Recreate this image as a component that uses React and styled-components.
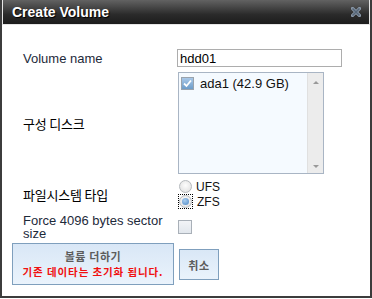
import styled, { createGlobalStyle } from 'styled-components';

const Global = createGlobalStyle`
  html, body { margin: 0; padding: 0; background: #fff; }
  body { font-family: "Liberation Sans", Arial, sans-serif; }
`;

const Window = styled.div`
  box-sizing: border-box;
  width: 372px;
  height: 298px;
  border: 2px solid #3c3c3c;
  border-top: 0;
  background: #fff;
  display: flex;
  flex-direction: column;
`;

const TitleBar = styled.div`
  box-sizing: border-box;
  height: 25px;
  margin: 0 -2px;
  border: 2px solid #3c3c3c;
  border-top: 0;
  border-bottom: 0;
  display: flex;
`;

const TitleInner = styled.div`
  flex: 1;
  display: flex;
  align-items: center;
  justify-content: space-between;
  padding: 0 8px 1px 9px;
  background: linear-gradient(#626262, #2b2b2b 60%, #1c1c1c);
  border: 1px solid #e6e6e6;
  border-top: 0;
`;

const Title = styled.span`
  color: #fff;
  font-weight: bold;
  font-size: 14px;
  text-shadow: 1px 1px 1px #000;
`;

const Body = styled.div`
  padding: 24px 0 0 21px;
  display: grid;
  grid-template-columns: 154px 166px;
  row-gap: 5px;
  align-items: center;
`;

const Label = styled.div`
  color: ${({ $kr }) => ($kr ? '#000' : '#1d2a3a')};
  font-family: ${({ $kr }) => ($kr ? '"Noto Sans CJK KR", sans-serif' : '"Liberation Sans", Arial, sans-serif')};
  font-size: 13px;
  line-height: 13px;
  letter-spacing: ${({ $kr }) => ($kr ? '-0.2px' : '0')};
`;

const TextInput = styled.input`
  box-sizing: border-box;
  width: 165px;
  height: 18px;
  border: 1px solid #adadad;
  padding: 0 2px;
  font-family: "Liberation Sans", Arial, sans-serif;
  font-size: 13px;
  color: #000;
  outline: none;
`;

const ListBox = styled.div`
  box-sizing: border-box;
  width: 146px;
  height: 102px;
  margin-left: 1px;
  border: 1px solid #a9b5c4;
  background: #f5faff;
  display: flex;
`;

const ListItems = styled.div`
  flex: 1;
  padding: 3px 2px;
`;

const Item = styled.div`
  display: flex;
  align-items: center;
  gap: 6px;
  font-size: 13px;
  color: #111;
`;

const Scroll = styled.div`
  width: 15px;
  background: #ececec;
  border-left: 1px solid #e0e0e0;
  display: flex;
  flex-direction: column;
  justify-content: space-between;
  align-items: center;
  padding: 8px 0 5px;
`;

const Arrow = styled.div`
  width: 0;
  height: 0;
  border-left: 3px solid transparent;
  border-right: 3px solid transparent;
  ${({ $down }) => ($down ? 'border-top: 3px solid #999;' : 'border-bottom: 3px solid #999;')}
`;

const Box = styled.span`
  box-sizing: border-box;
  width: 13px;
  height: 13px;
  border: 1px solid #9aa3ad;
  background: ${({ $on }) => ($on ? 'linear-gradient(#a9c8e8, #6d9cc9)' : 'linear-gradient(#eef2f7, #d7e1ec)')};
  display: inline-flex;
  align-items: center;
  justify-content: center;
`;

const Radios = styled.div`
  display: flex;
  flex-direction: column;
  padding-left: 2px;
`;

const RadioRow = styled.div`
  display: flex;
  align-items: center;
  gap: 4px;
  height: 15px;
  font-size: 12px;
  color: #111;
`;

const Focus = styled.span`
  display: inline-flex;
  border: 1px dotted #000;
  margin-left: -1px;
`;

const Radio = styled.span`
  box-sizing: border-box;
  width: 13px;
  height: 13px;
  border-radius: 50%;
  border: 1px solid #b5b9bd;
  background: radial-gradient(circle at 50% 40%, #fdfdfd, #dcdcdc);
  display: inline-flex;
  align-items: center;
  justify-content: center;
  &::after {
    content: '';
    display: ${({ $on }) => ($on ? 'block' : 'none')};
    width: 7px;
    height: 7px;
    border-radius: 50%;
    background: radial-gradient(circle at 40% 35%, #a9cdef, #4b87c4);
  }
`;

const ForceBox = styled(Box)`
  width: 14px;
  height: 14px;
  margin-left: 1px;
  border-color: #a9b0b8;
  background: linear-gradient(#f2f4f7, #e2e7ed);
`;

const Buttons = styled.div`
  display: flex;
  align-items: center;
  gap: 5px;
  padding: 3px 0 0 10px;
`;

const Button = styled.button`
  box-sizing: border-box;
  height: ${({ $big }) => ($big ? '42px' : '31px')};
  width: ${({ $big }) => ($big ? '162px' : '40px')};
  margin-top: ${({ $big }) => ($big ? '0' : '1px')};
  border: 1px solid #7f9fbd;
  background: linear-gradient(#d9e7f6, #eaf3fc);
  font-family: "Noto Sans CJK KR", sans-serif;
  font-weight: bold;
  font-size: 11px;
  letter-spacing: 0.6px;
  color: #5c5c5c;
  padding: 0;
  display: flex;
  flex-direction: column;
  align-items: center;
  justify-content: center;
  line-height: 16px;
`;

const Warn = styled.span`
  color: #f01010;
  font-size: 10.5px;
  letter-spacing: 0.9px;
`;

const Check = () => (
  <svg width="9" height="9" viewBox="0 0 9 9">
    <path d="M1 4.5 L3.5 7 L8 1.5" fill="none" stroke="#fff" strokeWidth="1.8" />
  </svg>
);

const Close = () => (
  <svg width="10" height="10" viewBox="0 0 10 10">
    <path d="M1.5 1.5 L8.5 8.5 M8.5 1.5 L1.5 8.5" stroke="#8a98a8" strokeWidth="3.2" strokeLinecap="square" />
    <path d="M1.5 1.5 L8.5 8.5 M8.5 1.5 L1.5 8.5" stroke="#556577" strokeWidth="1.6" />
  </svg>
);

export default function App() {
  return (
    <>
      <Global />
      <Window>
        <TitleBar>
          <TitleInner>
            <Title>Create Volume</Title>
            <Close />
          </TitleInner>
        </TitleBar>
        <Body>
          <Label>Volume name</Label>
          <TextInput defaultValue="hdd01" />
          <Label $kr>구성 디스크</Label>
          <ListBox>
            <ListItems>
              <Item>
                <Box $on>
                  <Check />
                </Box>
                ada1 (42.9 GB)
              </Item>
            </ListItems>
            <Scroll>
              <Arrow />
              <Arrow $down />
            </Scroll>
          </ListBox>
          <Label $kr>파일시스템 타입</Label>
          <Radios>
            <RadioRow>
              <Radio />
              UFS
            </RadioRow>
            <RadioRow>
              <Focus>
                <Radio $on />
              </Focus>
              ZFS
            </RadioRow>
          </Radios>
          <Label>Force 4096 bytes sector size</Label>
          <ForceBox />
        </Body>
        <Buttons>
          <Button $big>
            볼륨 더하기
            <Warn>기존 데이타는 초기화 됩니다.</Warn>
          </Button>
          <Button>취소</Button>
        </Buttons>
      </Window>
    </>
  );
}
